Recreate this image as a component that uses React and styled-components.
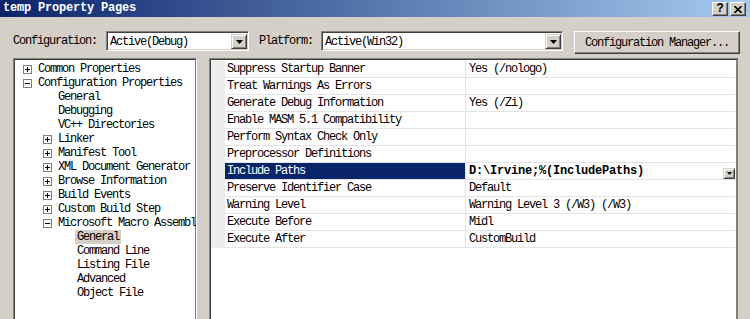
import React from "react";
import styled, { createGlobalStyle } from "styled-components";

const GlobalStyle = createGlobalStyle`
  html, body { margin: 0; padding: 0; background: #d4d0c8; }
  body { font-family: "Liberation Mono", "DejaVu Sans Mono", monospace; }
  * { box-sizing: border-box; }
`;

const FONT = `"Liberation Mono", "DejaVu Sans Mono", monospace`;

const Window = styled.div`
  width: 750px;
  height: 319px;
  overflow: hidden;
  background: #d4d0c8;
  display: flex;
  flex-direction: column;
  font-family: ${FONT};
  font-size: 12px;
  letter-spacing: -1.2px;
  color: #000;
`;

const TitleBar = styled.div`
  height: 17px;
  flex: none;
  display: flex;
  align-items: center;
  justify-content: space-between;
  padding: 0 4px 0 3px;
  background: linear-gradient(to right, #0a246a 0%, #a6caf0 100%);
`;

const TitleText = styled.div`
  color: #fff;
  font-weight: bold;
  font-size: 12px;
  letter-spacing: -0.2px;
  line-height: 17px;
`;

const TitleButtons = styled.div`
  display: flex;
  gap: 2px;
  padding-top: 1px;
`;

const CaptionButton = styled.div`
  width: 16px;
  height: 14px;
  background: #d4d0c8;
  border: 1px solid;
  border-color: #fff #404040 #404040 #fff;
  box-shadow: inset -1px -1px 0 #808080;
  display: flex;
  align-items: center;
  justify-content: center;
  font-weight: bold;
  font-size: 12px;
  letter-spacing: 0;
  line-height: 12px;
  color: #000;
`;

const Toolbar = styled.div`
  flex: none;
  display: flex;
  align-items: flex-start;
  padding: 14px 0 0 13px;
  height: 41px;
`;

const FieldLabel = styled.div`
  line-height: 20px;
  height: 20px;
  margin-right: ${(p) => p.$gap}px;
`;

const Combo = styled.div`
  width: ${(p) => p.$w}px;
  height: 20px;
  margin-right: ${(p) => p.$gap}px;
  background: #fff;
  border: 1px solid;
  border-color: #808080 #fff #fff #808080;
  box-shadow: inset 1px 1px 0 #404040, inset -1px -1px 0 #d4d0c8;
  display: flex;
  align-items: stretch;
  padding: 2px 1px 1px 3px;
`;

const ComboText = styled.div`
  flex: 1;
  line-height: 15px;
  padding-top: 1px;
`;

const DropButton = styled.div`
  width: ${(p) => p.$w || 16}px;
  height: ${(p) => (p.$h ? `${p.$h}px` : "auto")};
  flex: none;
  background: #d4d0c8;
  border: 1px solid;
  border-color: #d4d0c8 #404040 #404040 #d4d0c8;
  box-shadow: inset 1px 1px 0 #fff, inset -1px -1px 0 #808080;
  display: flex;
  align-items: center;
  justify-content: center;
  align-self: ${(p) => p.$align || "stretch"};
`;

const PushButton = styled.div`
  width: 166px;
  height: 23px;
  background: #d4d0c8;
  border: 1px solid;
  border-color: #fff #404040 #404040 #fff;
  box-shadow: inset -1px -1px 0 #808080;
  display: flex;
  align-items: center;
  justify-content: center;
  line-height: 20px;
`;

const Main = styled.div`
  flex: none;
  display: flex;
  align-items: flex-start;
  gap: 12px;
  padding: 0 0 0 13px;
`;

const TreePanel = styled.div`
  width: 184px;
  height: 300px;
  background: #fff;
  border: 1px solid;
  border-color: #808080 #fff #fff #808080;
  box-shadow: inset 1px 1px 0 #404040, inset -1px -1px 0 #808080;
  padding: 3px 2px 0 1px;
  overflow: hidden;
`;

const TreeRow = styled.div`
  height: 14px;
  display: flex;
  align-items: center;
  padding-left: ${(p) => p.$indent}px;
  white-space: nowrap;
`;

const ExpanderSlot = styled.div`
  width: 13px;
  flex: none;
  display: flex;
  align-items: center;
`;

const ExpandBox = styled.div`
  width: 9px;
  height: 9px;
  border: 1px solid #808080;
  background: #fff;
`;

const Sign = styled.svg`
  display: block;
`;

const TreeLabel = styled.div`
  padding: 0 2px;
  line-height: 14px;
  height: 14px;
  background: ${(p) => (p.$selected ? "#d4d0c8" : "transparent")};
`;

const GridPanel = styled.div`
  width: 529px;
  height: 300px;
  background: #fff;
  border: 1px solid #808080;
  box-shadow: inset 1px 1px 0 #404040, inset -1px 0 0 #808080;
  padding: 2px 2px 0 1px;
  overflow: hidden;
`;

const PropRow = styled.div`
  display: grid;
  grid-template-columns: 14px 240px 1fr;
  height: 17px;
`;

const Gutter = styled.div`
  background: #ececec;
`;

const NameCell = styled.div`
  border-bottom: 1px solid #e4e4e4;
  background: ${(p) => (p.$selected ? "#0a246a" : "#fff")};
  color: ${(p) => (p.$selected ? "#fff" : "#000")};
  padding-left: 2px;
  line-height: 16px;
  white-space: nowrap;
  overflow: hidden;
`;

const ValueCell = styled.div`
  border-bottom: 1px solid #e4e4e4;
  border-left: 1px solid #e4e4e4;
  padding-left: 3px;
  line-height: 16px;
  display: flex;
  justify-content: space-between;
  font-weight: ${(p) => (p.$bold ? "bold" : "normal")};
  letter-spacing: ${(p) => (p.$bold ? "-0.2px" : "-1.2px")};
  white-space: nowrap;
`;

const Arrow = ({ w = 7, h = 4 }) => (
  <svg width={w} height={h} viewBox={`0 0 ${w} ${h}`}>
    <polygon points={`0,0 ${w},0 ${w / 2},${h}`} fill="#000" />
  </svg>
);

const tree = [
  { l: 0, t: "Common Properties", e: "+" },
  { l: 0, t: "Configuration Properties", e: "-" },
  { l: 1, t: "General" },
  { l: 1, t: "Debugging" },
  { l: 1, t: "VC++ Directories" },
  { l: 1, t: "Linker", e: "+" },
  { l: 1, t: "Manifest Tool", e: "+" },
  { l: 1, t: "XML Document Generator", e: "+" },
  { l: 1, t: "Browse Information", e: "+" },
  { l: 1, t: "Build Events", e: "+" },
  { l: 1, t: "Custom Build Step", e: "+" },
  { l: 1, t: "Microsoft Macro Assembler", e: "-" },
  { l: 2, t: "General", s: true },
  { l: 2, t: "Command Line" },
  { l: 2, t: "Listing File" },
  { l: 2, t: "Advanced" },
  { l: 2, t: "Object File" },
];

const props = [
  ["Suppress Startup Banner", "Yes (/nologo)"],
  ["Treat Warnings As Errors", ""],
  ["Generate Debug Information", "Yes (/Zi)"],
  ["Enable MASM 5.1 Compatibility", ""],
  ["Perform Syntax Check Only", ""],
  ["Preprocessor Definitions", ""],
  ["Include Paths", "D:\\Irvine;%(IncludePaths)", true],
  ["Preserve Identifier Case", "Default"],
  ["Warning Level", "Warning Level 3 (/W3) (/W3)"],
  ["Execute Before", "Midl"],
  ["Execute After", "CustomBuild"],
];

const indentFor = (l) => 8 + Math.round(l * 19.5);

export default function App() {
  return (
    <>
      <GlobalStyle />
      <Window>
        <TitleBar>
          <TitleText>temp Property Pages</TitleText>
          <TitleButtons>
            <CaptionButton>?</CaptionButton>
            <CaptionButton>
              <svg width="8" height="7" viewBox="0 0 8 7">
                <path d="M0.5 0 L7.5 7 M7.5 0 L0.5 7" stroke="#000" strokeWidth="1.6" />
              </svg>
            </CaptionButton>
          </TitleButtons>
        </TitleBar>

        <Toolbar>
          <FieldLabel $gap={9}>Configuration:</FieldLabel>
          <Combo $w={143} $gap={10}>
            <ComboText>Active(Debug)</ComboText>
            <DropButton>
              <Arrow />
            </DropButton>
          </Combo>
          <FieldLabel $gap={8}>Platform:</FieldLabel>
          <Combo $w={242} $gap={11}>
            <ComboText>Active(Win32)</ComboText>
            <DropButton>
              <Arrow />
            </DropButton>
          </Combo>
          <PushButton>Configuration Manager...</PushButton>
        </Toolbar>

        <Main>
          <TreePanel>
            {tree.map((n, i) => (
              <TreeRow key={i} $indent={indentFor(n.l)}>
                <ExpanderSlot>
                  {n.e && (
                    <ExpandBox>
                      <Sign width="7" height="7" viewBox="0 0 7 7">
                        <rect x="1" y="3" width="5" height="1" fill="#000" />
                        {n.e === "+" && <rect x="3" y="1" width="1" height="5" fill="#000" />}
                      </Sign>
                    </ExpandBox>
                  )}
                </ExpanderSlot>
                <TreeLabel $selected={n.s}>{n.t}</TreeLabel>
              </TreeRow>
            ))}
          </TreePanel>

          <GridPanel>
            {props.map(([name, value, sel], i) => (
              <PropRow key={i}>
                <Gutter />
                <NameCell $selected={sel}>{name}</NameCell>
                <ValueCell $bold={sel}>
                  <span>{value}</span>
                  {sel && (
                    <DropButton $w={12} $h={11} $align="flex-end">
                      <Arrow w={5} h={3} />
                    </DropButton>
                  )}
                </ValueCell>
              </PropRow>
            ))}
          </GridPanel>
        </Main>
      </Window>
    </>
  );
}
